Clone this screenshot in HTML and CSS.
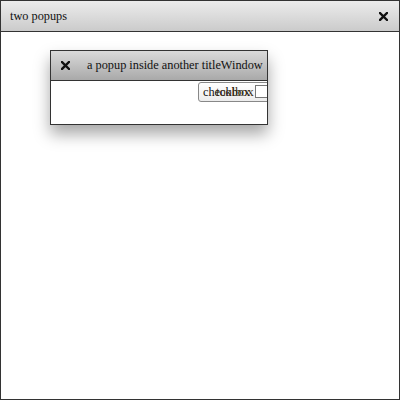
FILE: index.html
```html
<!DOCTYPE html>
<html>
<head>
<meta charset="utf-8">
<link rel="stylesheet" href="styles.css">
</head>
<body>
<div class="window">
  <div class="titlebar">
    <span class="title">two popups</span>
    <svg class="close" width="9" height="9" viewBox="0 0 9 9"><path d="M1 1 L8 8 M8 1 L1 8" stroke="#111" stroke-width="2.4" stroke-linecap="square"/></svg>
  </div>
  <div class="content"></div>
  <div class="popup">
    <div class="ptitlebar">
      <svg class="pclose" width="9" height="9" viewBox="0 0 9 9"><path d="M1 1 L8 8 M8 1 L1 8" stroke="#111" stroke-width="2.4" stroke-linecap="square"/></svg>
      <span class="ptitle">a popup inside another titleWindow</span>
    </div>
    <div class="pbody">
      <div class="btn">
        <span class="lbl">checkbox</span>
        <span class="lbl2">toolbox</span>
        <span class="chk"></span>
      </div>
    </div>
  </div>
</div>
</body>
</html>
```
FILE: styles.css
```css
html, body { margin: 0; padding: 0; background: #fff; }
body { font-family: "Liberation Serif", "Times New Roman", serif; font-size: 12.3px; color: #111; }
.window {
  position: relative;
  width: 400px; height: 400px;
  box-sizing: border-box;
  border: 1px solid #333;
  display: flex; flex-direction: column;
}
.titlebar {
  height: 30px;
  border-bottom: 1px solid #333;
  background: linear-gradient(#ececec, #cbcbcb);
  display: flex; align-items: center; justify-content: space-between;
  padding: 0 11px 0 9px;
}
.title { line-height: 30px; }
.close { display: block; flex-shrink: 0; }
.content { flex: 1; background: #fff; }
.popup {
  position: absolute;
  left: 49px; top: 49px;
  width: 218px; height: 75px;
  box-sizing: border-box;
  border: 1px solid #333;
  background: #fff;
  box-shadow: 0 9px 15px rgba(0,0,0,0.35);
  overflow: hidden;
  display: flex; flex-direction: column;
}
.ptitlebar {
  height: 29px;
  border-bottom: 1px solid #333;
  background: linear-gradient(#dadada, #a9a9a9);
  display: flex; align-items: center;
  padding-left: 10px;
}
.pclose { display: block; flex-shrink: 0; margin-right: 17px; }
.ptitle { line-height: 29px; white-space: nowrap; }
.pbody { flex: 1; position: relative; padding: 1px 0 0 147px; }
.btn {
  position: relative;
  width: 78px; height: 20px;
  box-sizing: border-box;
  border: 1px solid #888;
  border-radius: 3px;
  background: linear-gradient(#ffffff, #ececec);
  display: flex; align-items: center;
  padding-left: 4px;
}
.lbl { line-height: 18px; }
.lbl2 { position: absolute; left: 17px; top: 0; line-height: 18px; color: #3a2a10; }
.chk {
  position: absolute; left: 56px; top: 2px;
  width: 11px; height: 11px;
  border: 1px solid #777;
  background: #fff;
}
```
